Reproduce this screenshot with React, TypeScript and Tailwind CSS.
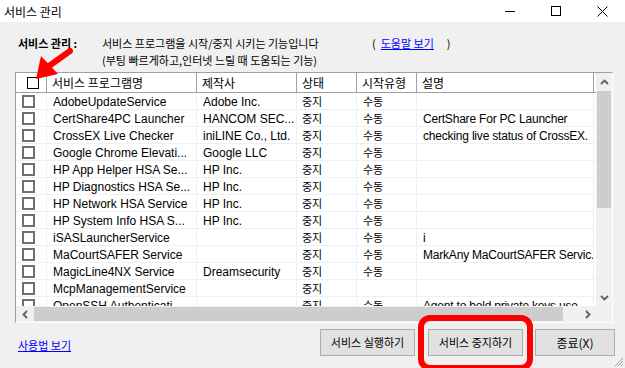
import React from "react";

const KR = { fontFamily: '"Noto Sans CJK KR", "Liberation Sans", sans-serif' };
const EN = { fontFamily: '"Liberation Sans", "Noto Sans CJK KR", sans-serif' };

type Row = { name: string; maker: string; status: string; type: string; desc: string };

const rows: Row[] = [
  { name: "AdobeUpdateService", maker: "Adobe Inc.", status: "중지", type: "수동", desc: "" },
  { name: "CertShare4PC Launcher", maker: "HANCOM SEC...", status: "중지", type: "수동", desc: "CertShare For PC Launcher" },
  { name: "CrossEX Live Checker", maker: "iniLINE Co., Ltd.", status: "중지", type: "수동", desc: "checking live status of CrossEX." },
  { name: "Google Chrome Elevati...", maker: "Google LLC", status: "중지", type: "수동", desc: "" },
  { name: "HP App Helper HSA Se...", maker: "HP Inc.", status: "중지", type: "수동", desc: "" },
  { name: "HP Diagnostics HSA Se...", maker: "HP Inc.", status: "중지", type: "수동", desc: "" },
  { name: "HP Network HSA Service", maker: "HP Inc.", status: "중지", type: "수동", desc: "" },
  { name: "HP System Info HSA S...", maker: "HP Inc.", status: "중지", type: "수동", desc: "" },
  { name: "iSASLauncherService", maker: "", status: "중지", type: "수동", desc: "i" },
  { name: "MaCourtSAFER Service", maker: "", status: "중지", type: "수동", desc: "MarkAny MaCourtSAFER Servic.." },
  { name: "MagicLine4NX Service", maker: "Dreamsecurity", status: "중지", type: "수동", desc: "" },
  { name: "McpManagementService", maker: "", status: "중지", type: "", desc: "" },
  { name: "OpenSSH Authenticati...", maker: "", status: "중지", type: "수동", desc: "Agent to hold private keys use..." },
];

function Chevron({ dir }: { dir: "up" | "down" | "left" | "right" }) {
  const d =
    dir === "up"
      ? "M1 6 L4.5 2.5 L8 6"
      : dir === "down"
      ? "M1 3 L4.5 6.5 L8 3"
      : dir === "left"
      ? "M6 1 L2.5 4.5 L6 8"
      : "M3 1 L6.5 4.5 L3 8";
  return (
    <svg width="9" height="9" viewBox="0 0 9 9">
      <path d={d} fill="none" stroke="#606060" strokeWidth="1.8" />
    </svg>
  );
}

export default function App() {
  return (
    <div className="relative w-[625px] h-[368px] bg-[#f0f0f0] overflow-hidden text-black" style={KR}>
      {/* title bar */}
      <div className="h-[22px] bg-white flex items-center relative">
        <span className="pl-[4px] text-[12px] leading-none pt-[1px]">서비스 관리</span>
        <div className="ml-auto flex h-full items-center">
          <div className="w-[46px] h-full flex items-center justify-center">
            <div className="w-[10px] h-[1px] bg-black" />
          </div>
          <div className="w-[46px] h-full flex items-center justify-center">
            <div className="w-[10px] h-[10px] border border-black" />
          </div>
          <div className="w-[46px] h-full flex items-center justify-center">
            <svg width="11" height="11" viewBox="0 0 11 11">
              <path d="M0.5 0.5 L10.5 10.5 M10.5 0.5 L0.5 10.5" stroke="black" strokeWidth="1" />
            </svg>
          </div>
        </div>
      </div>

      {/* header text */}
      <div className="pt-[13px] text-[11px] leading-[17px]">
        <div className="flex">
          <span className="pl-[18px] w-[102px] font-bold">서비스 관리 :</span>
          <span className="w-[270px]">서비스 프로그램을 시작/중지 시키는 기능입니다</span>
          <span>(</span>
          <span className="ml-[5px] text-[#0000ff] underline">도움말 보기</span>
          <span className="ml-[13px]">)</span>
        </div>
        <div className="flex">
          <span className="pl-[102px]">(부팅 빠르게하고,인터넷 느릴 때 도움되는 기능)</span>
        </div>
      </div>

      {/* list box */}
      <div className="mt-[3px] ml-[15px] w-[598px] h-[251px] border-t border-l border-[#a0a0a0] border-r border-r-white border-b border-b-white flex flex-col bg-white">
        <div className="flex h-[233px]">
          <div className="w-[580px] h-full overflow-hidden flex flex-col">
            {/* header */}
            <div className="flex h-[20px] shrink-0 bg-white border-b border-[#a0a0a0] text-[12px]">
              <div className="w-[31px] border-r border-[#a0a0a0] flex items-center pl-[11px]">
                <div className="w-[12px] h-[12px] border border-black bg-white" />
              </div>
              <div className="w-[150px] border-r border-[#a0a0a0] flex items-center pl-[5px]">서비스 프로그램명</div>
              <div className="w-[100px] border-r border-[#a0a0a0] flex items-center pl-[5px]">제작사</div>
              <div className="w-[60px] border-r border-[#a0a0a0] flex items-center pl-[5px]">상태</div>
              <div className="w-[60px] border-r border-[#a0a0a0] flex items-center pl-[5px]">시작유형</div>
              <div className="w-[177px] border-r border-[#a0a0a0] flex items-center pl-[5px]">설명</div>
            </div>
            {/* rows */}
            {rows.map((r, i) => (
              <div key={i} className="flex h-[17px] shrink-0 border-b border-[#f0f0f0]">
                <div className="w-[31px] border-r border-[#f0f0f0] flex items-center pl-[6px]">
                  <div className="w-[13px] h-[13px] border-2 border-[#707070] bg-white" />
                </div>
                <div className="w-[150px] border-r border-[#f0f0f0] flex items-center pl-[6px] pt-[2px] text-[12px] whitespace-nowrap overflow-hidden" style={EN}>
                  {r.name}
                </div>
                <div className="w-[100px] border-r border-[#f0f0f0] flex items-center pl-[6px] pt-[2px] text-[12px] whitespace-nowrap overflow-hidden" style={EN}>
                  {r.maker}
                </div>
                <div className="w-[60px] border-r border-[#f0f0f0] flex items-center pl-[5px] pt-[1px] text-[11px]">{r.status}</div>
                <div className="w-[60px] border-r border-[#f0f0f0] flex items-center pl-[6px] pt-[1px] text-[11px]">{r.type}</div>
                <div className="w-[177px] border-r border-[#f0f0f0] flex items-center pl-[6px] pt-[2px] text-[12px] tracking-[-0.2px] whitespace-nowrap overflow-hidden" style={EN}>
                  {r.desc}
                </div>
              </div>
            ))}
          </div>
          {/* vertical scrollbar */}
          <div className="w-[16px] h-full bg-[#f0f0f0] flex flex-col">
            <div className="h-[18px] flex items-center justify-center">
              <Chevron dir="up" />
            </div>
            <div className="mx-[1px] h-[117px] bg-[#cdcdcd]" />
            <div className="flex-1" />
            <div className="h-[18px] flex items-center justify-center">
              <Chevron dir="down" />
            </div>
          </div>
        </div>
        {/* horizontal scrollbar */}
        <div className="flex h-[16px] bg-[#f0f0f0]">
          <div className="w-[580px] flex items-center">
            <div className="w-[18px] h-full flex items-center justify-center">
              <Chevron dir="left" />
            </div>
            <div className="h-[14px] w-[529px] bg-[#cdcdcd]" />
            <div className="flex-1" />
            <div className="w-[18px] h-full flex items-center justify-center">
              <Chevron dir="right" />
            </div>
          </div>
          <div className="w-[16px] h-full bg-[#f0f0f0]" />
        </div>
      </div>

      {/* bottom */}
      <div className="flex items-start h-[45px]">
        <span className="ml-[18px] mt-[14px] text-[11px] text-[#0000ff] underline leading-[16px]">사용법 보기</span>
        <div className="ml-auto mt-[6px] mr-[10px] flex text-[11px]">
          <div className="w-[95px] h-[27px] bg-[#e1e1e1] border border-[#adadad] flex items-center justify-center">서비스 실행하기</div>
          <div className="ml-[13px] w-[95px] h-[27px] bg-[#e1e1e1] border border-[#adadad] flex items-center justify-center">서비스 중지하기</div>
          <div className="ml-[12px] w-[80px] h-[27px] bg-[#e1e1e1] border border-[#adadad] flex items-center justify-center text-[12px]">종료(X)</div>
        </div>
      </div>

      {/* resize grip */}
      <svg className="absolute right-[1px] bottom-[1px]" width="11" height="11" viewBox="0 0 11 11">
        <path d="M10 2 L2 10 M10 5 L5 10 M10 8 L8 10" stroke="#a0a0a0" strokeWidth="1" />
      </svg>

      {/* red highlight ring */}
      <div className="absolute left-[418px] top-[315px] w-[115px] h-[56px] border-[6px] border-[#ff0000] rounded-[12px]" />

      {/* red arrow */}
      <svg className="absolute left-[25px] top-[46px]" width="50" height="40" viewBox="0 0 50 40">
        <path d="M45 5 L24 20" stroke="#ff0000" strokeWidth="6" strokeLinecap="round" />
        <polygon points="11,33 33,28 16,10" fill="#ff0000" />
      </svg>
    </div>
  );
}
